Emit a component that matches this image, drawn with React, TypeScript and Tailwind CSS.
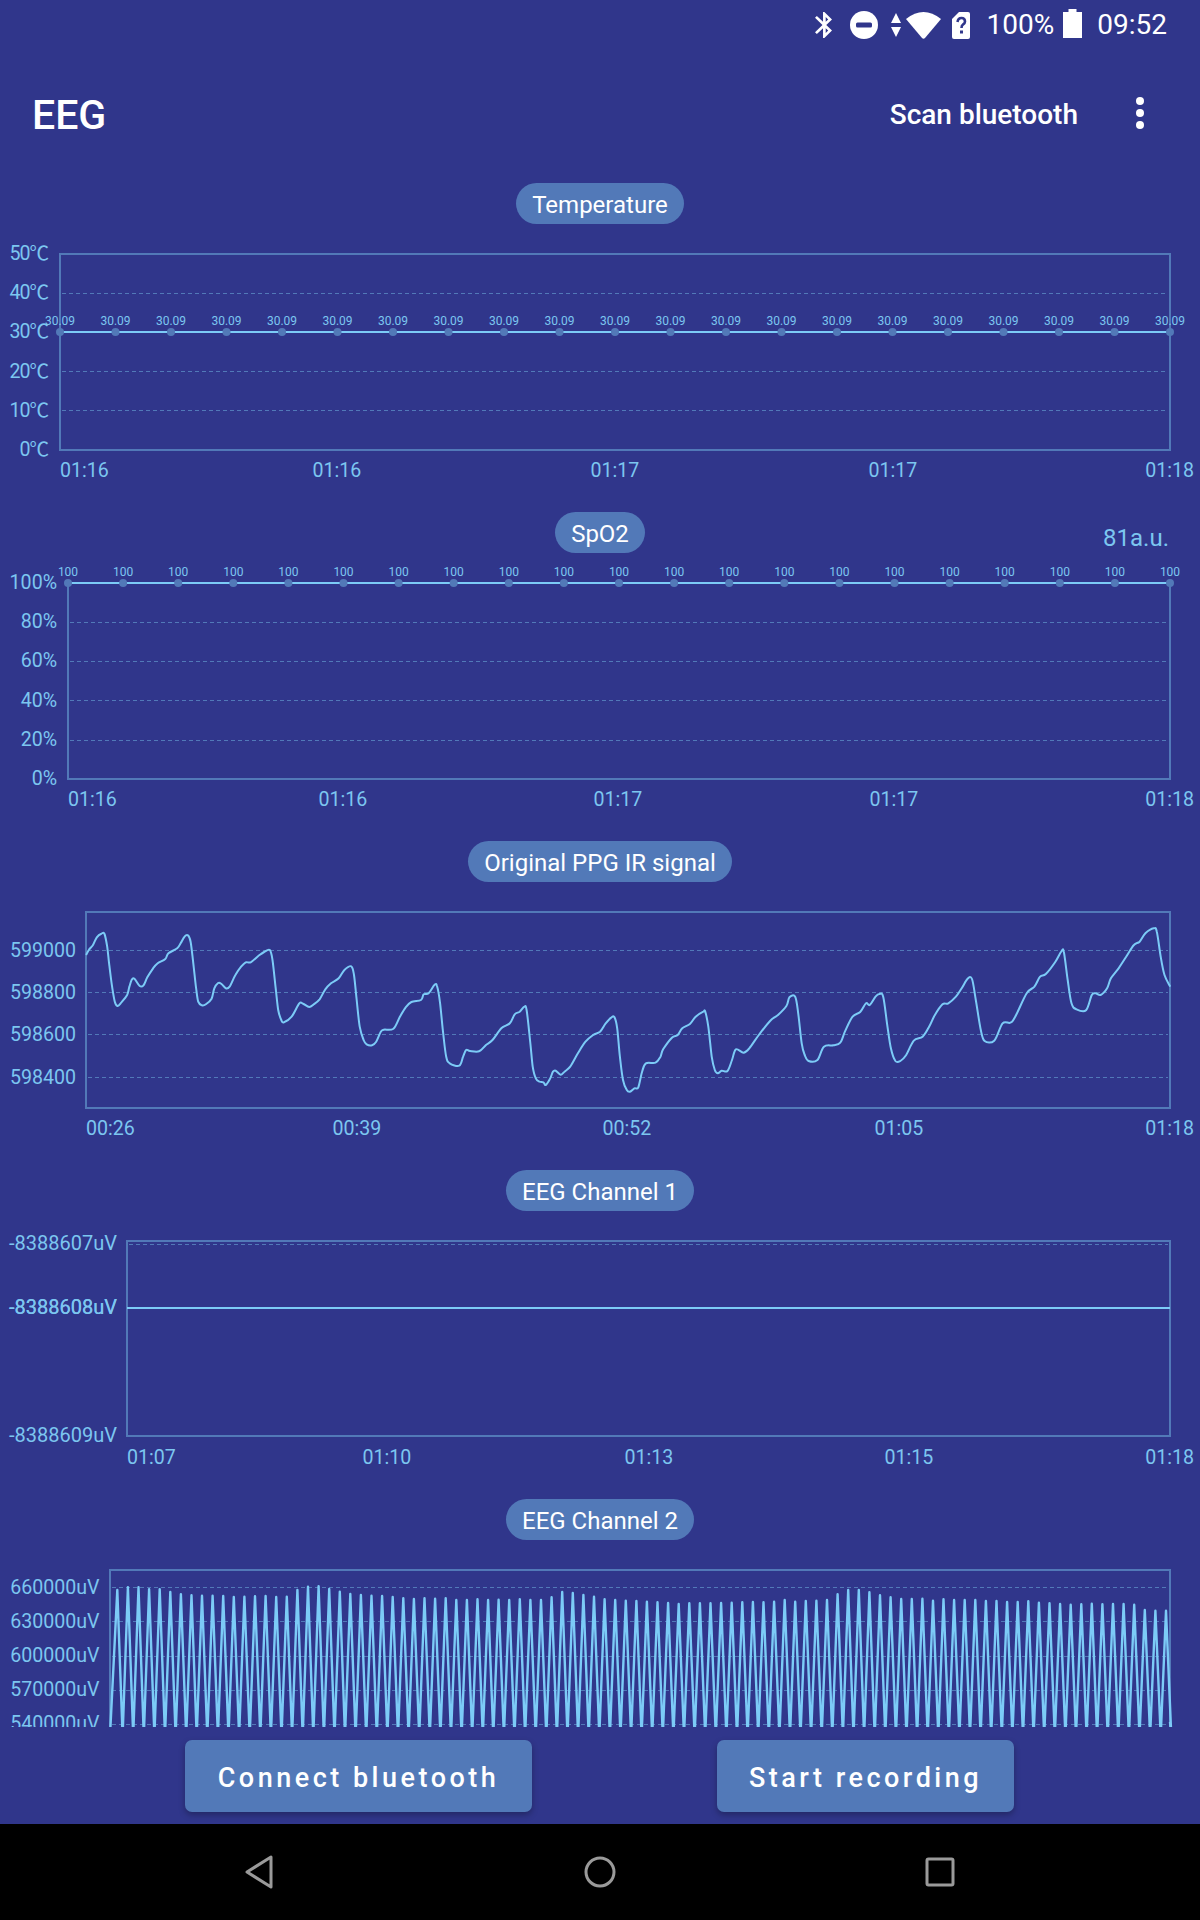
import React from "react";

const LINE = "#7ccbf7";
const AXIS = "#5279b8";
const LABEL = "#7cc6f0";
const FONT = "Roboto, 'Noto Sans CJK SC', sans-serif";

type Lbl = [string, number];
type XLbl = [string, number, "start" | "middle" | "end"];

function smooth(p: number[][]) {
  let d = `M${p[0][0].toFixed(1)} ${p[0][1].toFixed(1)}`;
  for (let i = 0; i < p.length - 1; i++) {
    const a = p[Math.max(i - 1, 0)], b = p[i], c = p[i + 1], e = p[Math.min(i + 2, p.length - 1)];
    const k = 1 / 6;
    d += ` C${(b[0] + (c[0] - a[0]) * k).toFixed(1)} ${(b[1] + (c[1] - a[1]) * k).toFixed(1)} ${(c[0] - (e[0] - b[0]) * k).toFixed(1)} ${(c[1] - (e[1] - b[1]) * k).toFixed(1)} ${c[0].toFixed(1)} ${c[1].toFixed(1)}`;
  }
  return d;
}

const z3 = [225,165,232,150,243,135,253,112,265,101,273,102,280,140,286,200,293,260,300,305,307,318,315,310,332,285,338,260,345,238,352,237,365,258,375,256,385,232,400,205,412,190,432,177,440,160,463,145,472,130,482,110,491,106,498,125,505,190,512,260,518,305,528,316,538,313,553,296,560,265,570,249,578,251,590,265,600,260,615,225,630,200,642,187,655,187,675,168,690,156,705,150,712,180,720,260,727,330,735,360,742,367,762,350,782,310,792,311,808,321,820,313,835,298,850,268,865,250,885,235,900,210,918,199,925,225,932,300,940,380,950,420,958,433,972,436,983,425,995,395,1003,389,1028,386,1045,350,1060,322,1075,306,1100,300,1107,283,1120,280,1135,255,1142,258,1150,310,1158,400,1166,470,1175,490,1200,497,1210,470,1218,450,1228,453,1252,454,1270,435,1287,420,1310,385,1332,370,1345,343,1358,335,1370,320,1376,330,1385,420,1392,500,1400,535,1410,545,1420,547,1426,555,1437,537,1445,515,1452,512,1465,524,1475,515,1490,500,1510,460,1530,425,1550,405];
const z4 = [0,395,15,370,30,352,38,352,45,385,52,470,60,540,70,570,78,575,90,565,100,562,110,515,120,490,145,488,158,470,165,448,188,413,203,405,215,385,235,372,250,350,270,335,275,335,283,380,292,470,300,510,308,520,318,512,333,513,345,480,355,448,375,458,390,445,415,405,445,362,465,345,487,318,495,292,510,290,518,340,527,430,535,465,545,483,568,480,585,440,610,436,628,428,640,395,660,350,680,336,695,310,705,315,720,290,730,282,740,290,750,370,760,445,772,483,785,483,800,465,820,422,843,410,860,380,875,345,895,313,910,310,930,290,945,265,960,237,972,237,982,300,995,390,1005,423,1030,422,1052,370,1072,368,1085,350,1115,280,1135,260,1150,230,1165,222,1190,185,1205,155,1212,155,1222,240,1232,310,1245,328,1270,331,1285,285,1295,280,1308,285,1325,265,1335,235,1355,205,1375,170,1395,135,1410,125,1425,100,1447,85,1455,95,1465,170,1475,225,1490,260];

const ppgPts: number[][] = [];
for (let i = 0; i < z3.length; i += 2) ppgPts.push([z3[i] / 2.613, 900 + z3[i + 1] / 3]);
for (let i = 0; i < z4.length; i += 2) ppgPts.push([600 + z4[i] / 2.613, 900 + z4[i + 1] / 3]);
const ppgPath = smooth(ppgPts);

const peaks5 = [150,142,142,148,148,156,163,166,167,167,168,171,170,169,168,171,170,150,140,139,147,155,162,165,167,168,171].map((z) => 1540 + z / 3);
const peaks6 = [115,117,115,116,115,120,120,118,120,119,120,118,120,120,112,96,99,105,110,118,120,122,123,125,127,129,132,130,130,130,129,128,127,126,127,125,120,125,123,122,120,103,90,90,97,106,112,117,117,116,122,118,120,120,120,123,123,126,126,124,128,130,132,134,133,131,133,132,132,134,150,152,152].map((z) => 1560 + z / 3);
const allPeaks = [...peaks5, ...peaks6];
const step5 = (1166 - 117.3) / (allPeaks.length - 1);
const eegPts = allPeaks
  .map((y, i) => {
    const x = 117.3 + i * step5;
    return `${x.toFixed(1)},${y.toFixed(1)} ${(x + step5 / 2).toFixed(1)},1736`;
  })
  .join(" ");

function Axis({ ys, right, x, base, size = 19.6 }: { ys: Lbl[]; right: number; x: XLbl[]; base?: number; size?: number }) {
  return (
    <g fontFamily={FONT} fill={LABEL} fontSize={19.6}>
      {ys.map(([t, y], i) => (
        <text key={i} x={right} y={y + 7} textAnchor="end" fontSize={size}>
          {t.endsWith("℃") ? (
            <>
              <tspan letterSpacing={-1}>{t.slice(0, -1)}</tspan>℃
            </>
          ) : (
            t
          )}
        </text>
      ))}
      {x.map(([t, px, a], i) => (
        <text key={i} x={px} y={(base ?? 0) + 7} textAnchor={a}>{t}</text>
      ))}
    </g>
  );
}

function Grid({ x1, x2, ys }: { x1: number; x2: number; ys: number[] }) {
  return (
    <g stroke={AXIS} strokeWidth={1} strokeDasharray="4 3">
      {ys.map((y) => <line key={y} x1={x1} x2={x2} y1={y + 0.5} y2={y + 0.5} />)}
    </g>
  );
}

function Dots({ x0, dx, y, text, ty }: { x0: number; dx: number; y: number; text: string; ty: number }) {
  const items = Array.from({ length: 21 }, (_, i) => x0 + i * dx);
  return (
    <g>
      <line x1={x0} x2={x0 + 20 * dx} y1={y} y2={y} stroke={LINE} strokeWidth={2} />
      {items.map((x) => <circle key={x} cx={x} cy={y} r={4} fill={AXIS} />)}
      <g fontFamily={FONT} fontSize={12} fill={LABEL} textAnchor="middle">
        {items.map((x) => <text key={x} x={x} y={ty}>{text}</text>)}
      </g>
    </g>
  );
}

function Plot({ top, height, children }: { top: number; height: number; children: React.ReactNode }) {
  return (
    <svg className="block" width={1200} height={height} viewBox={`0 ${top} 1200 ${height}`}>
      {children}
    </svg>
  );
}

function Pill({ children }: { children: React.ReactNode }) {
  return (
    <span className="flex h-[41px] items-center rounded-full bg-[#5279b8] px-4 pt-[2px] text-[24px] leading-none text-white">
      {children}
    </span>
  );
}

function Section({ title, side, height, children }: { title: string; side?: string; height?: string; children: React.ReactNode }) {
  return (
    <section className={height ?? "h-[329px]"}>
      <div className="grid h-[41px] grid-cols-[1fr_auto_1fr]">
        <div />
        <Pill>{title}</Pill>
        <div className="flex items-end justify-end pr-[31px] text-[24px] leading-[30px] text-[#7cc6f0]">{side}</div>
      </div>
      {children}
    </section>
  );
}

function StatusBar() {
  return (
    <div className="flex h-[48px] items-center justify-end pr-[33px] pt-[2px] text-[28px] leading-none text-white">
      <svg width="17" height="26" viewBox="5 2 12.71 20" preserveAspectRatio="none" fill="#fff">
        <path d="M17.71 7.71L12 2h-1v7.59L6.41 5 5 6.41 10.59 12 5 17.59 6.41 19 11 14.41V22h1l5.71-5.71-4.3-4.29 4.3-4.29zM13 5.83l1.88 1.88L13 9.59V5.83zm1.88 10.46L13 18.17v-3.76l1.88 1.88z" />
      </svg>
      <svg className="ml-[18px]" width="28" height="28" viewBox="0 0 28 28">
        <circle cx="14" cy="14" r="14" fill="#fff" />
        <rect x="6" y="11.5" width="16" height="5" rx="1.5" fill="#30368b" />
      </svg>
      <svg className="ml-[13px]" width="10" height="24" viewBox="0 0 10 24" fill="#fff">
        <path d="M5 0 L10 10 H0 Z M0 14 H10 L5 24 Z" />
      </svg>
      <svg className="ml-[5px]" width="35" height="28" viewBox="0 0 35 28" fill="#fff">
        <path d="M0 8 Q17.5 -6 35 8 L19 27 Q17.5 28.5 16 27 Z" />
      </svg>
      <svg className="ml-[11px]" width="18" height="27" viewBox="0 0 18 27">
        <path d="M7 0 H16 Q18 0 18 2 V25 Q18 27 16 27 H2 Q0 27 0 25 V7 Z" fill="#fff" />
        <path d="M5.5 10 Q6 6 9.5 6 Q13 6 13 9.5 Q13 11.5 11 12.5 Q9.5 13.5 9.5 16" fill="none" stroke="#30368b" strokeWidth="2.6" />
        <rect x="8" y="18.5" width="3" height="3" fill="#30368b" />
      </svg>
      <span className="ml-[17px]">100%</span>
      <svg className="ml-[9px] -translate-y-[2px]" width="19" height="29" viewBox="0 0 19 29" fill="#fff">
        <path d="M5.5 0 H13.5 V3 H19 V29 H0 V3 H5.5 Z" />
      </svg>
      <span className="ml-[15px]">09:52</span>
    </div>
  );
}

function Toolbar() {
  return (
    <div className="flex h-[130px] items-center pl-[32px] pr-[56px] text-white">
      <span className="pt-[4px] text-[41px] font-medium leading-none">EEG</span>
      <span className="ml-auto pt-[3px] text-[28px] font-medium leading-none">Scan bluetooth</span>
      <span className="ml-[58px] flex flex-col gap-[4px]">
        <i className="block size-[8px] rounded-full bg-white" />
        <i className="block size-[8px] rounded-full bg-white" />
        <i className="block size-[8px] rounded-full bg-white" />
      </span>
    </div>
  );
}

function ActionButton({ width, children }: { width: string; children: React.ReactNode }) {
  return (
    <button className={`${width} h-[72px] rounded-[7px] bg-[#5279b8] pt-[4px] text-[27px] font-medium leading-none tracking-[3.5px] text-white shadow-[0_3px_6px_rgba(0,0,0,0.28)]`}>
      {children}
    </button>
  );
}

const x1: XLbl[] = [["01:16", 60, "start"], ["01:16", 337, "middle"], ["01:17", 615, "middle"], ["01:17", 893, "middle"], ["01:18", 1194, "end"]];
const x2: XLbl[] = [["01:16", 68, "start"], ["01:16", 343, "middle"], ["01:17", 618, "middle"], ["01:17", 894, "middle"], ["01:18", 1194, "end"]];
const x3: XLbl[] = [["00:26", 86, "start"], ["00:39", 357, "middle"], ["00:52", 627, "middle"], ["01:05", 899, "middle"], ["01:18", 1194, "end"]];
const x4: XLbl[] = [["01:07", 127, "start"], ["01:10", 387, "middle"], ["01:13", 649, "middle"], ["01:15", 909, "middle"], ["01:18", 1194, "end"]];

export default function App() {
  return (
    <div className="flex h-[1920px] w-[1200px] flex-col overflow-hidden bg-[#30368b] [font-family:Roboto,sans-serif]">
      <StatusBar />
      <Toolbar />
      <main className="mt-[5px] flex-1">
        <Section title="Temperature">
          <Plot top={224} height={288}>
            <rect x={60} y={254} width={1110} height={196} fill="none" stroke={AXIS} strokeWidth={2} />
            <Grid x1={62} x2={1168} ys={[293, 371, 410]} />
            <Axis right={49} ys={[["50℃", 253], ["40℃", 292], ["30℃", 331], ["20℃", 371], ["10℃", 410], ["0℃", 449]]} x={x1} base={470} />
            <Dots x0={60} dx={55.5} y={332} text="30.09" ty={325} />
          </Plot>
        </Section>
        <Section title="SpO2" side="81a.u.">
          <Plot top={553} height={288}>
            <rect x={68} y={583} width={1102} height={196} fill="none" stroke={AXIS} strokeWidth={2} />
            <Grid x1={70} x2={1168} ys={[622, 661, 700, 740]} />
            <Axis right={57} ys={[["100%", 582], ["80%", 621], ["60%", 660], ["40%", 700], ["20%", 739], ["0%", 778]]} x={x2} base={799} />
            <Dots x0={68} dx={55.1} y={583} text="100" ty={576} />
          </Plot>
        </Section>
        <Section title="Original PPG IR signal">
          <Plot top={882} height={288}>
            <rect x={86} y={912} width={1084} height={196} fill="none" stroke={AXIS} strokeWidth={2} />
            <Grid x1={88} x2={1168} ys={[950, 992, 1034, 1077]} />
            <Axis right={76} ys={[["599000", 949.5], ["598800", 992], ["598600", 1034], ["598400", 1076.5]]} x={x3} base={1128} />
            <path d={ppgPath} fill="none" stroke={LINE} strokeWidth={2} strokeLinejoin="round" />
          </Plot>
        </Section>
        <Section title="EEG Channel 1">
          <Plot top={1212} height={287}>
            <rect x={127} y={1242} width={1043} height={195} fill="none" stroke={AXIS} strokeWidth={2} />
            <Grid x1={129} x2={1168} ys={[1245]} />
            <Axis size={20} right={117} ys={[["-8388607uV", 1244], ["-8388608uV", 1308], ["-8388608uV", 1308.4], ["-8388609uV", 1436]]} x={x4} base={1458} />
            <line x1={127} x2={1170} y1={1309} y2={1309} stroke={LINE} strokeWidth={2} />
          </Plot>
        </Section>
        <Section title="EEG Channel 2" height="h-[228px]">
          <Plot top={1540} height={187}>
            <path d="M110 1727 V1570 H1170 V1727" fill="none" stroke={AXIS} strokeWidth={2} />
            <Grid x1={112} x2={1168} ys={[1587, 1621, 1656, 1690, 1724]} />
            <Axis right={99.5} ys={[["660000uV", 1587], ["630000uV", 1621], ["600000uV", 1655], ["570000uV", 1689], ["540000uV", 1723]]} x={[]} />
            <polyline points={`110,1736 ${eegPts} 1170,1722`} fill="none" stroke={LINE} strokeWidth={2.4} strokeLinejoin="round" />
          </Plot>
        </Section>
        <div className="mt-[13px] flex pl-[185px]">
          <ActionButton width="w-[347px]">Connect bluetooth</ActionButton>
          <div className="w-[185px]" />
          <ActionButton width="w-[297px]">Start recording</ActionButton>
        </div>
      </main>
      <nav className="flex h-[96px] items-center justify-center bg-black">
        <svg width="800" height="40" viewBox="200 1852 800 40" fill="none" stroke="#9a9a9a" strokeWidth="3">
          <path d="M271 1857 V1887 L247 1872 Z" strokeLinejoin="round" />
          <circle cx="600" cy="1872" r="14" />
          <rect x="927" y="1859" width="26" height="26" rx="1.5" />
        </svg>
      </nav>
    </div>
  );
}
